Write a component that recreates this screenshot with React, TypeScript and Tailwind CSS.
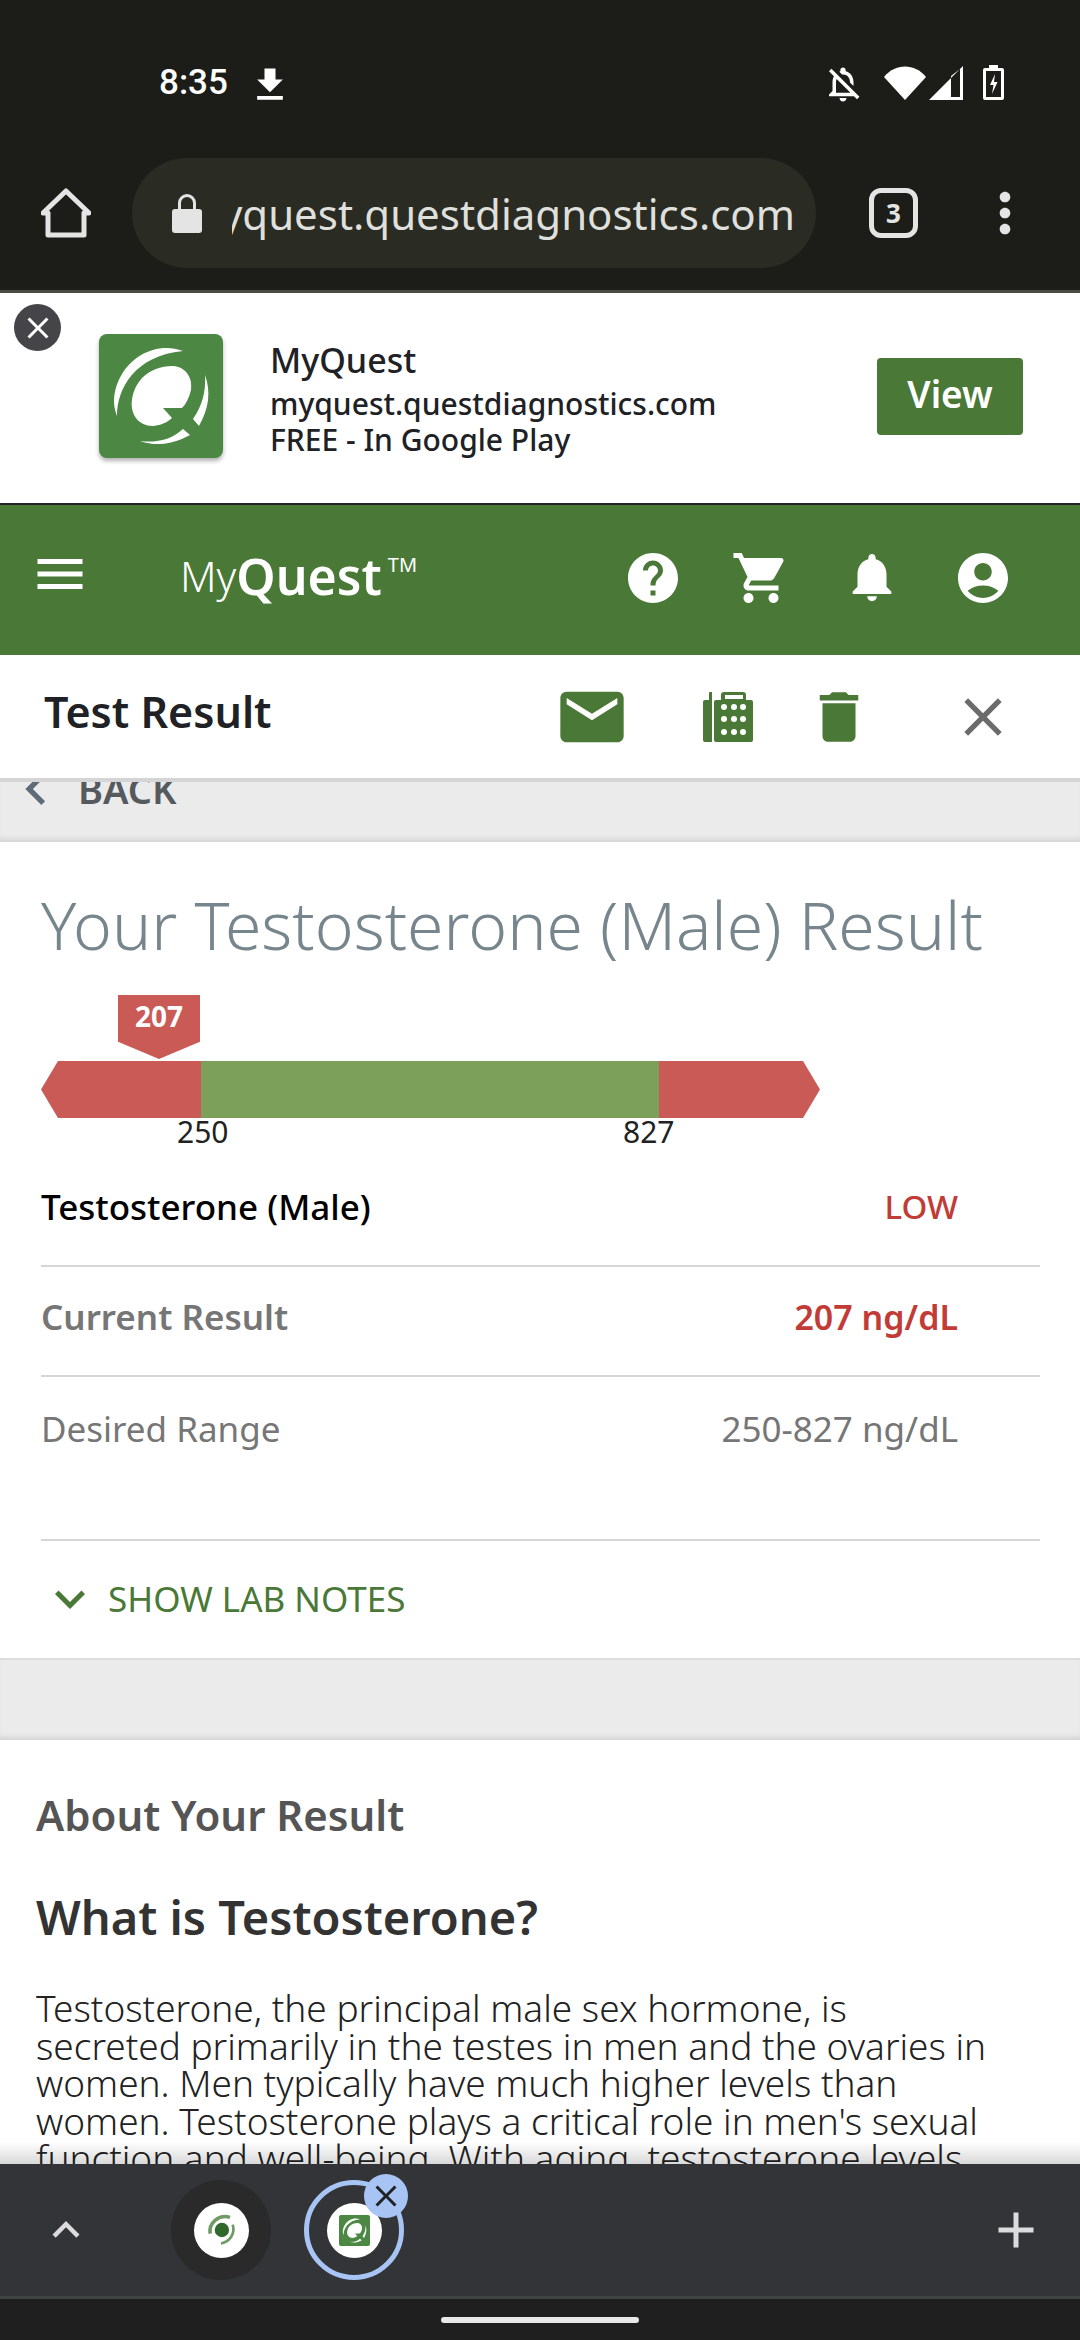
import {
  MdAccountCircle,
  MdAdd,
  MdChevronLeft,
  MdClose,
  MdDelete,
  MdEmail,
  MdExpandLess,
  MdExpandMore,
  MdFileDownload,
  MdHelp,
  MdMenu,
  MdMoreVert,
  MdNotifications,
  MdOutlineNotificationsOff,
  MdShoppingCart,
} from "react-icons/md";

const font = "font-['Noto_Sans','Roboto',sans-serif]";

const QuestLogo = ({ className }: { className?: string }) => (
  <svg viewBox="0 0 124 124" className={className}>
    <rect width="124" height="124" rx="8" fill="#4c8844" />
    <path d="M84 17C60 8 35 20 23 40C14 55 13 70 18 82C18 55 35 22 84 17Z" fill="#fff" />
    <path
      d="M73 32C85 32 94 42 92 56C90 64 87 70 83 74H64L73 84C62 94 45 95 37 84C29 73 33 55 43 44C51 36 62 32 73 32Z"
      fill="#fff"
    />
    <path d="M106 41C112 58 110 74 100 92L94 85C103 72 107 58 106 41Z" fill="#fff" />
    <path d="M41 107C58 113 74 110 91 101L84 95C72 106 57 109 41 107Z" fill="#fff" />
  </svg>
);

const FaxPhone = ({ className }: { className?: string }) => (
  <svg viewBox="0 0 50 51" className={className} fill="#4a7836">
    <path d="M7 1h2v50H2a2 2 0 0 1-2-2V11a2 2 0 0 1 2-2h4V2a1 1 0 0 1 1-1z" />
    <path
      d="M13 9h5V4a3 3 0 0 1 3-3h19a3 3 0 0 1 3 3v5h5a2 2 0 0 1 2 2v38a2 2 0 0 1-2 2H13a2 2 0 0 1-2-2V11a2 2 0 0 1 2-2zM22 4v4h18V4z"
      fillRule="evenodd"
    />
    {[16, 28, 41].map((cy) =>
      [21, 31, 40].map((cx) => <circle key={`${cx}-${cy}`} cx={cx} cy={cy} r="3" fill="#fff" />),
    )}
  </svg>
);

const Row = ({
  label,
  value,
  labelClass,
  valueClass,
  height,
}: {
  label: string;
  value: string;
  labelClass: string;
  valueClass: string;
  height: string;
}) => (
  <div className={`flex items-center justify-between pr-[82px] border-b-2 border-[#d6d6d6] ${height}`}>
    <span className={labelClass}>{label}</span>
    <span className={valueClass}>{value}</span>
  </div>
);

export default function App() {
  return (
    <div className={`relative h-[2340px] w-[1080px] overflow-hidden bg-white flex flex-col ${font}`}>
      {/* android status + chrome toolbar */}
      <div className="h-[293px] shrink-0 bg-[#1c1d18] border-b-[3px] border-[#4a4b42] flex flex-col">
        <div className="h-[158px] flex items-start pt-[62px] pl-[159px] text-white">
          <span className="text-[35px] leading-[42px] font-medium font-['Roboto',sans-serif]">8:35</span>
          <MdFileDownload className="w-[44px] h-[48px] ml-[20px] mt-[-1px]" />
          <MdOutlineNotificationsOff className="w-[42px] h-[42px] ml-[530px] mt-[1px]" />
          <svg viewBox="0 0 42 34" className="w-[42px] h-[34px] ml-[20px] mt-[4px]" fill="#fff">
            <path d="M0 11C11 -3 31 -3 42 11L21 34z" />
          </svg>
          <svg viewBox="0 0 34 34" className="w-[34px] h-[34px] ml-[3px] mt-[4px]" fill="#fff">
            <path d="M34 0v34H0zM22 10v21h9V3z" fillRule="evenodd" />
          </svg>
          <svg viewBox="0 0 21 35" className="w-[21px] h-[35px] ml-[20px] mt-[3px]" fill="#fff">
            <path
              d="M6 0h9v3h4a2 2 0 0 1 2 2v28a2 2 0 0 1-2 2H2a2 2 0 0 1-2-2V5a2 2 0 0 1 2-2h4zM3 6v26h15V6zM12 9l-5 11h3.500L9 29l5.500-12H11z"
              fillRule="evenodd"
            />
          </svg>
        </div>
        <div className="flex items-center h-[110px]">
          <svg viewBox="0 0 50 50" className="w-[50px] h-[50px] ml-[41px] shrink-0" fill="none" stroke="#e4e4e4" strokeWidth="5" strokeLinejoin="round">
            <path d="M2 25 25 3 48 25H43V47H7V25z" />
          </svg>
          <div className="w-[684px] h-[110px] ml-[41px] rounded-[55px] bg-[#2a2b23] flex items-center pl-[40px] pr-[21px] overflow-hidden">
            <svg viewBox="0 0 30 39" className="w-[30px] h-[39px] shrink-0" fill="#e4e4e4">
              <path d="M6 15V9a9 9 0 0 1 18 0v6h3a3 3 0 0 1 3 3v18a3 3 0 0 1-3 3H3a3 3 0 0 1-3-3V18a3 3 0 0 1 3-3zM9 15h12V9a6 6 0 0 0-12 0z" fillRule="evenodd" />
            </svg>
            <div className="ml-[30px] flex-1 flex justify-end overflow-hidden">
              <span className="text-[42px] text-[#dfdfdc] whitespace-nowrap">myquest.questdiagnostics.com</span>
            </div>
          </div>
          <div className="ml-[53px] w-[49px] h-[50px] rounded-[12px] border-[5px] border-[#e4e4e4] text-[#e4e4e4] text-[26px] font-bold flex items-center justify-center">3</div>
          <MdMoreVert className="w-[64px] h-[64px] ml-[55px] text-[#e4e4e4]" />
        </div>
      </div>

      {/* install banner */}
      <div className="relative h-[212px] shrink-0 bg-white border-b-2 border-[#20212a] flex items-center pl-[99px] pr-[57px]">
        <div className="absolute left-[14px] top-[11px] w-[47px] h-[47px] rounded-full bg-[#454549] flex items-center justify-center">
          <MdClose className="w-[36px] h-[36px] text-white" />
        </div>
        <QuestLogo className="w-[124px] h-[124px] mt-[-4px] drop-shadow-[0_3px_2px_rgba(0,0,0,0.3)] shrink-0" />
        <div className="ml-[47px] flex-1 text-[#202124] font-medium mt-[2px]">
          <div className="text-[34px] leading-[40px] mb-[6px]">MyQuest</div>
          <div className="text-[30px] leading-[36px] whitespace-nowrap">myquest.questdiagnostics.com</div>
          <div className="text-[30px] leading-[36px]">FREE - In Google Play</div>
        </div>
        <div className="w-[146px] h-[77px] mt-[-4px] pb-[4px] rounded-[4px] bg-[#4a7836] text-white text-[37px] font-semibold flex items-center justify-center">View</div>
      </div>

      {/* site header */}
      <div className="h-[150px] shrink-0 bg-[#4a7836] flex items-start text-white pt-[43px]">
        <MdMenu className="w-[60px] h-[60px] ml-[30px] mt-[-4px] shrink-0" />
        <div className="ml-[90px] w-[310px] flex items-start mt-[2px]">
          <span className="text-[42px] leading-[52px] font-light">My</span>
          <span className="text-[50px] leading-[52px] font-semibold">Quest</span>
          <span className="text-[20px] leading-[30px] ml-[6px]">TM</span>
        </div>
        <MdHelp className="w-[60px] h-[60px] ml-[133px]" />
        <MdShoppingCart className="w-[60px] h-[60px] ml-[48px]" />
        <MdNotifications className="w-[58px] h-[58px] ml-[52px]" />
        <MdAccountCircle className="w-[60px] h-[60px] ml-[52px]" />
      </div>

      {/* result toolbar */}
      <div className="h-[127px] shrink-0 bg-white border-b-4 border-[#d5d5d5] flex items-center">
        <span className="ml-[44px] w-[510px] text-[43px] font-semibold text-[#202124] mt-[-8px]">Test Result</span>
        <MdEmail className="w-[76px] h-[76px] text-[#4a7836]" />
        <FaxPhone className="w-[50px] h-[51px] ml-[73px]" />
        <MdDelete className="w-[66px] h-[66px] ml-[53px] text-[#4a7836]" />
        <MdClose className="w-[64px] h-[64px] ml-[79px] text-[#6b6b6b]" />
      </div>

      {/* scrolled page */}
      <div className="h-[60px] shrink-0 bg-[#ebebeb] shadow-[inset_0_-6px_6px_-4px_rgba(0,0,0,0.12)] overflow-hidden">
        <div className="flex items-center mt-[-13px] h-[40px] text-[#555a5f]">
          <MdChevronLeft className="w-[64px] h-[64px] ml-[4px] text-[#5f6b78] shrink-0" />
          <span className="ml-[10px] text-[38px] font-semibold">BACK</span>
        </div>
      </div>

      <div className="h-[818px] shrink-0 bg-white pl-[41px] pr-[40px] border-b-2 border-[#dddddd]">
        <h1 className="mt-[46px] text-[66px] leading-[72px] font-light text-[#77858d] whitespace-nowrap">Your Testosterone (Male) Result</h1>

        {/* range bar with marker */}
        <div className="relative mt-[36px] h-[132px] w-[780px]">
          <div className="absolute left-[77px] top-[-1px] w-[82px] h-[64px] bg-[#ca5a56] text-white text-[28px] font-bold text-center leading-[42px] [clip-path:polygon(0_0,100%_0,100%_73%,50%_100%,0_73%)]">207</div>
          <div className="absolute left-0 top-[65px] w-[779px] h-[57px] flex [clip-path:polygon(17px_0,762px_0,100%_50%,762px_100%,17px_100%,0_50%)]">
            <div className="w-[160px] bg-[#ca5a56]" />
            <div className="w-[458px] bg-[#7c9f5a]" />
            <div className="flex-1 bg-[#ca5a56]" />
          </div>
          <span className="absolute left-[136px] top-[118px] text-[30px] leading-[36px] text-[#222]">250</span>
          <span className="absolute left-[582px] top-[118px] text-[30px] leading-[36px] text-[#222]">827</span>
        </div>

        <Row label="Testosterone (Male)" value="LOW" height="h-[110px] mt-[29px] pb-[8px]" labelClass="text-[35px] font-medium text-black" valueClass="text-[33px] font-medium text-[#c23b36]" />
        <Row label="Current Result" value="207 ng/dL" height="h-[110px] pb-[8px]" labelClass="text-[35px] font-semibold text-[#767676]" valueClass="text-[34px] font-semibold text-[#c23b36]" />
        <Row label="Desired Range" value="250-827 ng/dL" height="h-[164px] pb-[58px]" labelClass="text-[35px] text-[#767676]" valueClass="text-[35px] text-[#767676]" />
        <div className="flex items-center h-[118px] pb-[2px] text-[#4a7836]">
          <MdExpandMore className="w-[60px] h-[60px] ml-[-1px]" />
          <span className="ml-[8px] text-[35px]">SHOW LAB NOTES</span>
        </div>
      </div>

      <div className="h-[80px] shrink-0 bg-[#ebebeb] shadow-[inset_0_-6px_6px_-4px_rgba(0,0,0,0.12)]" />

      <div className="relative flex-1 bg-white px-[36px] overflow-hidden">
        <h2 className="mt-[50px] text-[42px] leading-[50px] font-semibold text-[#555]">About Your Result</h2>
        <h3 className="mt-[50px] text-[47px] leading-[54px] font-semibold text-[#333]">What is Testosterone?</h3>
        <p className="mt-[45px] text-[37px] leading-[37.5px] font-light text-[#222] w-[955px]">
          Testosterone, the principal male sex hormone, is secreted primarily in the testes in men and the ovaries in women. Men typically have much higher levels than women. Testosterone plays a critical role in men's sexual function and well-being. With aging, testosterone levels
        </p>
        <div className="absolute inset-x-0 bottom-0 h-[22px] bg-gradient-to-b from-transparent to-black/15" />
      </div>

      {/* chrome tab group strip */}
      <div className="h-[135px] shrink-0 bg-[#323437] border-b-[3px] border-[#3f4341] flex items-center">
        <MdExpandLess className="w-[54px] h-[54px] ml-[39px] text-[#dcdcdc]" />
        <div className="ml-[78px] w-[100px] h-[100px] rounded-full bg-[#2a2a2b] flex items-center justify-center">
          <div className="w-[55px] h-[55px] rounded-full bg-white flex items-center justify-center">
            <svg viewBox="0 0 40 40" className="w-[36px] h-[36px]">
              <path d="M30 6C18 2 6 12 8 24" fill="none" stroke="#6f9a66" strokeWidth="4" />
              <path d="M33 14C36 24 30 33 20 35" fill="none" stroke="#6f9a66" strokeWidth="3" />
              <circle cx="21" cy="20" r="8" fill="#2f6a2a" />
            </svg>
          </div>
        </div>
        <div className="relative ml-[33px] w-[100px] h-[100px] rounded-full border-[5px] border-[#a8c4f5] flex items-center justify-center">
          <div className="w-[55px] h-[55px] rounded-full bg-white flex items-center justify-center">
            <QuestLogo className="w-[31px] h-[31px]" />
          </div>
          <div className="absolute right-[-9px] top-[-11px] w-[44px] h-[44px] rounded-full bg-[#a8c4f5] flex items-center justify-center">
            <MdClose className="w-[36px] h-[36px] text-[#202124]" />
          </div>
        </div>
        <MdAdd className="w-[60px] h-[60px] ml-auto mr-[34px] text-[#dcdcdc]" />
      </div>

      {/* gesture nav */}
      <div className="h-[41px] shrink-0 bg-[#1f1f1f] flex items-start justify-center pt-[18px]">
        <div className="w-[198px] h-[6px] rounded-full bg-[#e8e8e8]" />
      </div>
    </div>
  );
}
